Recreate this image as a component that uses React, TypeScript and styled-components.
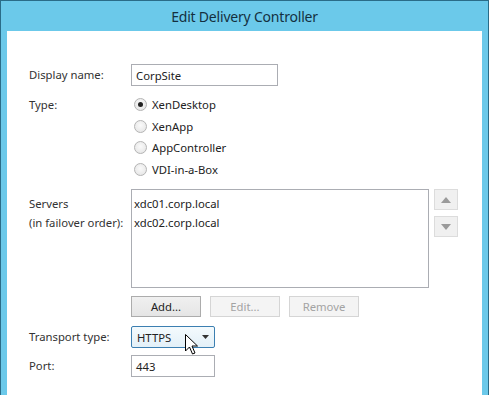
import styled, { createGlobalStyle } from 'styled-components'

const GlobalStyle = createGlobalStyle`
  body {
    margin: 0;
    background: #ffffff;
    font-family: "Noto Sans", "Open Sans", sans-serif;
  }
`

const Frame = styled.div`
  width: 489px;
  height: 395px;
  box-sizing: border-box;
  background: #6bc9ea;
  border: 1px solid #2a6c88;
  border-bottom: none;
  padding: 0 6px;
  display: flex;
  flex-direction: column;
  overflow: hidden;
`

const TitleBar = styled.div`
  height: 29px;
  display: flex;
  align-items: center;
  justify-content: center;
  font-size: 14px;
  letter-spacing: -0.2px;
  color: #14303f;
  padding-top: 1px;
`

const Content = styled.div`
  flex: 1;
  background: #ffffff;
  padding: 33px 0 0 22px;
  display: flex;
  flex-direction: column;
  font-size: 11.3px;
  color: #333333;
  position: relative;
`

const Row = styled.div<{ $gap?: number }>`
  display: flex;
  align-items: flex-start;
  margin-bottom: ${(p) => p.$gap ?? 8}px;
`

const Label = styled.div<{ $top?: number }>`
  width: 102px;
  flex: none;
  padding-top: ${(p) => p.$top ?? 0}px;
  line-height: 19px;
`

const TextBox = styled.div<{ $width: number }>`
  width: ${(p) => p.$width}px;
  height: 22px;
  box-sizing: border-box;
  border: 1px solid #abadb3;
  padding: 0 4px;
  display: flex;
  align-items: center;
  color: #222;
`

const RadioList = styled.div`
  display: flex;
  flex-direction: column;
`

const RadioRow = styled.div`
  height: 21.6px;
  display: flex;
  align-items: center;
  gap: 5px;
  padding-left: 3px;
  color: #222;
`

const RadioCircle = styled.span<{ $checked?: boolean }>`
  width: 13px;
  height: 13px;
  box-sizing: border-box;
  border-radius: 50%;
  border: 1px solid #b4b4b4;
  background: radial-gradient(circle at 50% 40%, #fafafa 0%, #e2e2e2 100%);
  display: flex;
  align-items: center;
  justify-content: center;
  &::after {
    content: '';
    display: ${(p) => (p.$checked ? 'block' : 'none')};
    width: 5px;
    height: 5px;
    border-radius: 50%;
    background: #222;
  }
`

const ListBox = styled.div`
  width: 298px;
  height: 99px;
  box-sizing: border-box;
  border: 1px solid #abadb3;
  padding: 4px 2px;
  color: #222;
  line-height: 19px;
`

const SideButtons = styled.div`
  display: flex;
  flex-direction: column;
  gap: 6px;
  margin-left: 5px;
`

const ArrowButton = styled.div`
  width: 24px;
  height: 21px;
  box-sizing: border-box;
  border: 1px solid #dcdcdc;
  background: #f0f0f0;
  display: flex;
  align-items: center;
  justify-content: center;
`

const Buttons = styled.div`
  display: flex;
  gap: 9px;
  margin-left: 102px;
  margin-bottom: 9px;
`

const Button = styled.div<{ $disabled?: boolean }>`
  width: 70px;
  height: 21px;
  box-sizing: border-box;
  border: 1px solid ${(p) => (p.$disabled ? '#d5d5d5' : '#acacac')};
  background: ${(p) =>
    p.$disabled ? '#f4f4f4' : 'linear-gradient(#f0f0f0, #e5e5e5)'};
  color: ${(p) => (p.$disabled ? '#a3a3a3' : '#222')};
  display: flex;
  align-items: center;
  justify-content: center;
`

const Select = styled.div`
  width: 84px;
  height: 22px;
  box-sizing: border-box;
  border: 1px solid #3c7fb1;
  border-radius: 2px;
  background: linear-gradient(#f4fafd, #e3f0f8);
  padding: 0 5px;
  display: flex;
  align-items: center;
  justify-content: space-between;
  color: #222;
`

const Cursor = styled.svg`
  position: absolute;
  left: 178px;
  top: 303px;
`

const App = () => {
  return (
    <>
      <GlobalStyle />
      <Frame>
        <TitleBar>Edit Delivery Controller</TitleBar>
        <Content>
          <Row>
            <Label $top={1}>Display name:</Label>
            <TextBox $width={147}>CorpSite</TextBox>
          </Row>
          <Row $gap={9}>
            <Label $top={1}>Type:</Label>
            <RadioList>
              <RadioRow>
                <RadioCircle $checked />
                XenDesktop
              </RadioRow>
              <RadioRow>
                <RadioCircle />
                XenApp
              </RadioRow>
              <RadioRow>
                <RadioCircle />
                AppController
              </RadioRow>
              <RadioRow>
                <RadioCircle />
                VDI-in-a-Box
              </RadioRow>
            </RadioList>
          </Row>
          <Row>
            <Label $top={5}>
              Servers
              <br />
              (in failover order):
            </Label>
            <ListBox>
              xdc01.corp.local
              <br />
              xdc02.corp.local
            </ListBox>
            <SideButtons>
              <ArrowButton>
                <svg width="10" height="6" viewBox="0 0 10 6">
                  <path d="M0 6 L5 0 L10 6 Z" fill="#9a9a9a" />
                </svg>
              </ArrowButton>
              <ArrowButton>
                <svg width="10" height="6" viewBox="0 0 10 6">
                  <path d="M0 0 L10 0 L5 6 Z" fill="#9a9a9a" />
                </svg>
              </ArrowButton>
            </SideButtons>
          </Row>
          <Buttons>
            <Button>Add...</Button>
            <Button $disabled>Edit...</Button>
            <Button $disabled>Remove</Button>
          </Buttons>
          <Row $gap={7}>
            <Label $top={1}>Transport type:</Label>
            <Select>
              HTTPS
              <svg width="7" height="4" viewBox="0 0 7 4">
                <path d="M0 0 L7 0 L3.5 4 Z" fill="#333" />
              </svg>
            </Select>
          </Row>
          <Row>
            <Label $top={1}>Port:</Label>
            <TextBox $width={84}>443</TextBox>
          </Row>
          <Cursor width="14" height="22" viewBox="0 0 14 22">
            <path
              d="M0.5 0.5 L0.5 17 L4.5 13 L7.5 20 L10 19 L7 12 L12.5 12 Z"
              fill="#fff"
              stroke="#000"
              strokeWidth="1"
              strokeLinejoin="miter"
            />
          </Cursor>
        </Content>
      </Frame>
    </>
  )
}

export default App
